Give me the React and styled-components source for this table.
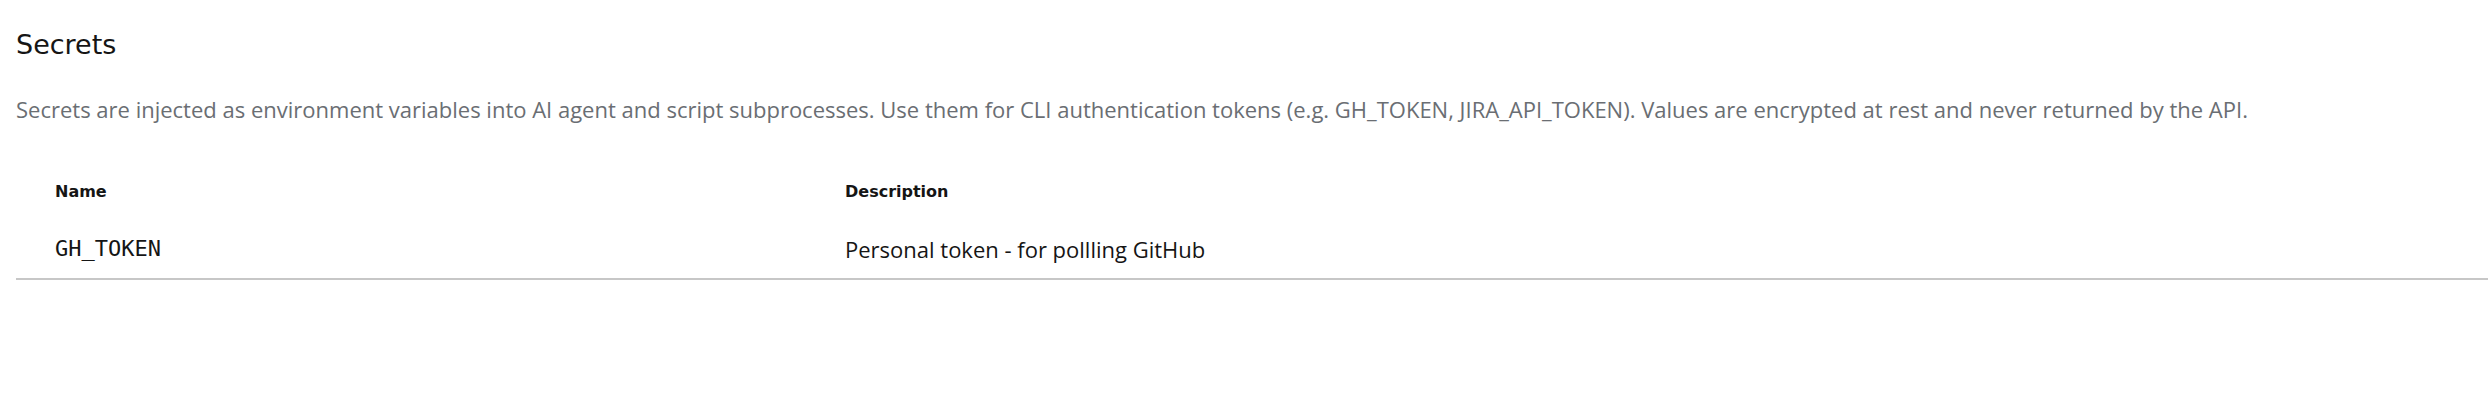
import React from "react";
import styled, { createGlobalStyle } from "styled-components";

const GlobalStyle = createGlobalStyle`
  html, body {
    margin: 0;
    padding: 0;
    background: #ffffff;
  }
  body {
    font-family: "Open Sans", "Liberation Sans", sans-serif;
    color: #151515;
  }
`;

const Page = styled.section`
  padding: 25px 0 0 16px;
`;

const Title = styled.h2`
  margin: 0;
  font-family: "DejaVu Sans", sans-serif;
  font-size: 27px;
  font-weight: 400;
  line-height: 40px;
  color: #151515;
`;

const Lead = styled.p`
  margin: 29px 0 0;
  font-family: "Open Sans", sans-serif;
  font-size: 22px;
  line-height: 30px;
  color: #6a6e73;
`;

const Table = styled.div`
  margin-top: 56px;
  display: grid;
  grid-template-columns: 829px 1fr;
  border-bottom: 2px solid #c7c7c7;
`;

const HeadCell = styled.div`
  padding: ${(p) => (p.$first ? "0 0 0 39px" : "0")};
  font-family: "DejaVu Sans", sans-serif;
  font-size: 16px;
  font-weight: 700;
  line-height: 24px;
  color: #151515;
`;

const Cell = styled.div`
  padding: ${(p) => (p.$first ? "30px 0 14px 39px" : "30px 0 14px 0")};
  font-family: ${(p) =>
    p.$mono ? '"DejaVu Sans Mono", monospace' : '"Open Sans", sans-serif'};
  font-size: 22px;
  line-height: 30px;
  color: #151515;
`;

const secrets = [
  { name: "GH_TOKEN", description: "Personal token - for pollling GitHub" },
];

export default function App() {
  return (
    <>
      <GlobalStyle />
      <Page>
        <Title>Secrets</Title>
        <Lead>
          Secrets are injected as environment variables into AI agent and
          script subprocesses. Use them for CLI authentication tokens (e.g.
          GH_TOKEN, JIRA_API_TOKEN). Values are encrypted at rest and never
          returned by the API.
        </Lead>
        <Table>
          <HeadCell $first>Name</HeadCell>
          <HeadCell>Description</HeadCell>
          {secrets.map((s) => (
            <React.Fragment key={s.name}>
              <Cell $first $mono>
                {s.name}
              </Cell>
              <Cell>{s.description}</Cell>
            </React.Fragment>
          ))}
        </Table>
      </Page>
    </>
  );
}
